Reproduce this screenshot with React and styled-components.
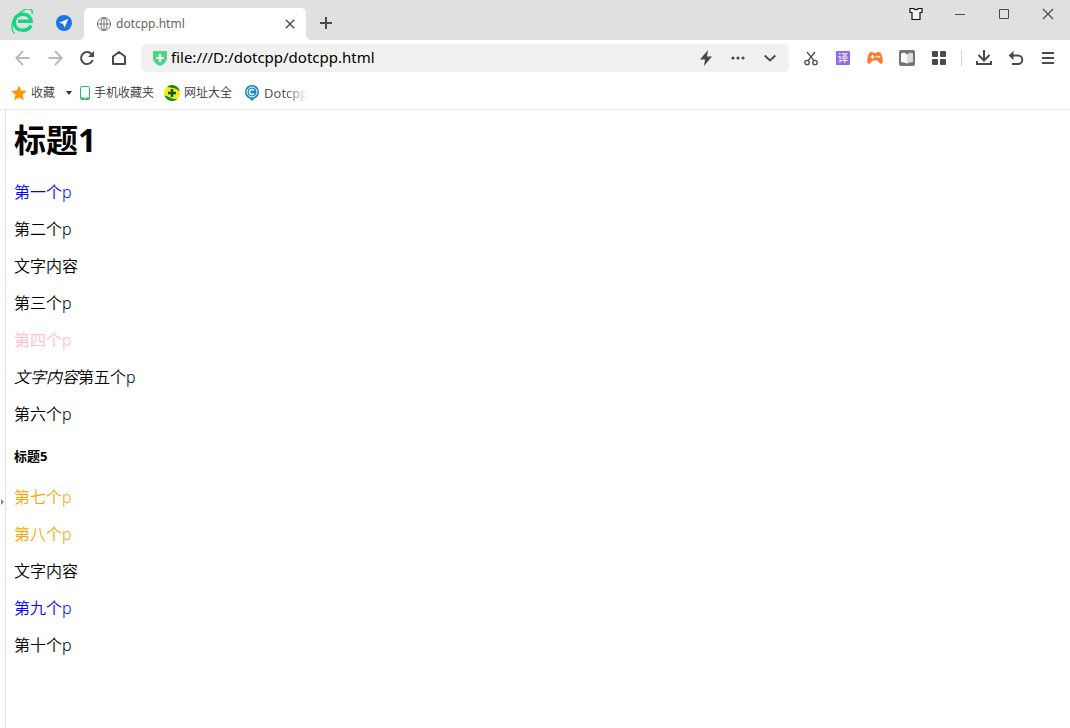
import React from "react";
import styled, { createGlobalStyle } from "styled-components";

const GlobalStyle = createGlobalStyle`
  * {
    box-sizing: border-box;
  }
  body {
    margin: 0;
    background: #fff;
    color: #000;
    font-family: "Noto Sans", "Noto Sans CJK SC", sans-serif;
  }
  svg {
    display: block;
    flex: none;
  }
`;

const Browser = styled.div`
  display: flex;
  flex-direction: column;
  min-height: 100vh;
`;

const TitleBar = styled.header`
  display: flex;
  align-items: flex-end;
  height: 40px;
  background: #e0e0e0;
`;

const Brand = styled.div`
  display: flex;
  align-items: center;
  align-self: stretch;
  gap: 22px;
  width: 84px;
  padding: 6px 0 0 10px;
`;

const PlainButton = styled.button`
  display: flex;
  align-items: center;
  justify-content: center;
  margin: 0;
  padding: 0;
  border: 0;
  background: none;
  color: #4a4a4a;
  font: inherit;
`;

const Tab = styled.div`
  position: relative;
  display: flex;
  align-items: center;
  gap: 4px;
  width: 222px;
  height: 32px;
  padding: 0 8px 0 12px;
  border-radius: 5px 5px 0 0;
  background: #fff;

  &::before,
  &::after {
    content: "";
    position: absolute;
    bottom: 0;
    width: 4px;
    height: 4px;
  }
  &::before {
    left: -4px;
    background: radial-gradient(circle at 0 0, #e0e0e0 3px, #fff 4px);
  }
  &::after {
    right: -4px;
    background: radial-gradient(circle at 100% 0, #e0e0e0 3px, #fff 4px);
  }
`;

const TabTitle = styled.span`
  flex: 1;
  color: #666;
  font-size: 12px;
  line-height: 18px;
`;

const TabClose = styled(PlainButton)`
  width: 16px;
  height: 16px;
`;

const NewTab = styled(PlainButton)`
  width: 40px;
  height: 34px;
`;

const WindowControls = styled.div`
  display: flex;
  align-self: flex-start;
  margin-left: auto;
`;

const WindowButton = styled(PlainButton)`
  width: 44px;
  height: 28px;
`;

const Toolbar = styled.nav`
  display: flex;
  align-items: center;
  height: 36px;
  padding: 0 6px 0 7px;
`;

const ToolButton = styled(PlainButton)`
  flex: none;
  width: 32px;
  height: 28px;
  color: ${props => (props.disabled ? "#b8b8b8" : "#4a4a4a")};
`;

const AddressBar = styled.div`
  display: flex;
  flex: 1;
  align-items: center;
  height: 28px;
  margin: 0 6px;
  padding: 0 3px 0 11px;
  border-radius: 5px;
  background: #f1f1f1;
`;

const AddressInput = styled.input`
  flex: 1;
  min-width: 0;
  height: 28px;
  padding: 0 0 2px 3px;
  border: 0;
  outline: 0;
  background: none;
  color: #000;
  font: 15px "Noto Sans", "Noto Sans CJK SC", sans-serif;
`;

const Divider = styled.span`
  flex: none;
  width: 1px;
  height: 16px;
  margin: 0 6px;
  background: #d4d4d4;
`;

const Bookmarks = styled.nav`
  display: flex;
  align-items: center;
  gap: 10px;
  height: 34px;
  padding: 0 11px;
  border-bottom: 1px solid #ececec;
`;

const Bookmark = styled.a`
  display: flex;
  align-items: center;
  gap: 4px;
  color: #333;
  font-size: 12px;
  font-weight: 350;
  line-height: 18px;
  text-decoration: none;
  white-space: nowrap;
`;

const FavoritesToggle = styled(PlainButton)`
  width: 8px;
  height: 18px;
  margin-right: -3px;
`;

const FadedLabel = styled.span`
  font-size: 13px;
  font-weight: 400;
  color: #555;
  mask-image: linear-gradient(to right, #000 50%, transparent);
`;

const Viewport = styled.div`
  display: flex;
  flex: 1;
`;

const SideHandle = styled(PlainButton)`
  flex: none;
  justify-content: flex-start;
  width: 6px;
  padding-top: 166px;
  border-right: 1px solid #e3e3e3;
`;

const Page = styled.main`
  flex: 1;
  padding: 8px;
  font-size: 16px;
  font-weight: 350;
  line-height: 21px;
`;

const Heading1 = styled.h1`
  margin: 0 0 21px;
  font-size: 32px;
  line-height: 43px;
`;

const Heading5 = styled.h5`
  margin: 22px 0;
  font-size: 13px;
  line-height: 18px;
`;

const Paragraph = styled.p`
  margin: 16px 0;
  color: ${props => props.$color || "#000"};
`;

const LogoIcon = () => (
  <svg width="24" height="28" viewBox="0 0 24 28" fill="none" stroke="#14d683">
    <path
      d="M21 16.500C19.500 19.800 16.500 21.300 12.800 21.300C7.500 21.300 4.200 18 4.200 13.200C4.200 8.500 7.800 5.200 12.500 5.200C17.500 5.200 20.800 8 21 12.300H8"
      strokeWidth="3.600"
    />
    <path d="M4.500 24.500C0 20.500 1.500 10 9 4.500C13 1.200 18.500 -1.500 21.500 1C22.500 2 22.500 3.500 22 5" strokeWidth="1.400" />
  </svg>
);

const PlaneIcon = () => (
  <svg width="16" height="16" viewBox="0 0 16 16">
    <circle cx="8" cy="8" r="8" fill="#1a73e8" />
    <path d="M12.300 3.700L3 7.800L7 8.800L8.600 12.800Z" fill="#fff" />
  </svg>
);

const GlobeIcon = () => (
  <svg width="16" height="16" viewBox="0 0 16 16" fill="none" stroke="#777">
    <circle cx="8" cy="8" r="6.500" />
    <ellipse cx="8" cy="8" rx="3" ry="6.500" />
    <path d="M1.500 8H14.500M8 1.500V14.500" />
  </svg>
);

const CrossIcon = ({ size, weight }) => (
  <svg width={size} height={size} viewBox="0 0 10 10" fill="none" stroke="currentColor" strokeWidth={weight}>
    <path d="M0.800 0.800L9.200 9.200M9.200 0.800L0.800 9.200" />
  </svg>
);

const PlusIcon = () => (
  <svg width="12" height="12" viewBox="0 0 12 12" stroke="currentColor" strokeWidth="2">
    <path d="M6 0V12M0 6H12" />
  </svg>
);

const ShirtIcon = () => (
  <svg width="14" height="14" viewBox="0 0 14 14" fill="#f4f4f4" stroke="#111" strokeWidth="1.200">
    <path d="M1 1.500H4.500Q7 3.800 9.500 1.500H13V5.500H11V12.500H3V5.500H1Z" />
  </svg>
);

const MinimizeIcon = () => (
  <svg width="10" height="10" viewBox="0 0 10 10" stroke="currentColor">
    <path d="M0 5.500H10" />
  </svg>
);

const MaximizeIcon = () => (
  <svg width="10" height="10" viewBox="0 0 10 10" fill="none" stroke="currentColor">
    <path d="M0.500 0.500H9.500V9.500H0.500Z" />
  </svg>
);

const BackIcon = () => (
  <svg width="16" height="16" viewBox="0 0 16 16" fill="none" stroke="currentColor" strokeWidth="1.800">
    <path d="M14.500 8H1.500M8 1L1.200 8L8 15" />
  </svg>
);

const ForwardIcon = () => (
  <svg width="16" height="16" viewBox="0 0 16 16" fill="none" stroke="currentColor" strokeWidth="1.800">
    <path d="M1.500 8H14.500M8 1L14.800 8L8 15" />
  </svg>
);

const ReloadIcon = () => (
  <svg width="16" height="16" viewBox="0 0 16 16" fill="none" stroke="currentColor" strokeWidth="2">
    <path d="M13.700 10A6 6 0 1 1 12.500 4" />
    <path d="M15 1V7H9Z" fill="currentColor" stroke="none" />
  </svg>
);

const HomeIcon = () => (
  <svg width="16" height="16" viewBox="0 0 16 16" fill="none" stroke="currentColor" strokeWidth="2" strokeLinejoin="round">
    <path d="M2 6.500L8 2L14 6.500V14H2Z" />
  </svg>
);

const ShieldIcon = () => (
  <svg width="16" height="16" viewBox="0 0 16 16">
    <path d="M1 2Q1 1 2 1H14Q15 1 15 2V9Q14.500 13 8 16Q1.500 13 1 9Z" fill="#48d97f" />
    <path d="M8 4V12M4 8H12" stroke="#fff" strokeWidth="2.200" />
  </svg>
);

const BoltIcon = () => (
  <svg width="14" height="16" viewBox="0 0 14 16" fill="currentColor">
    <path d="M9 0L1 9.500H6L5 16L13 6.500H8Z" />
  </svg>
);

const DotsIcon = () => (
  <svg width="14" height="14" viewBox="0 0 14 14" fill="currentColor">
    <circle cx="2" cy="7" r="1.600" />
    <circle cx="7" cy="7" r="1.600" />
    <circle cx="12" cy="7" r="1.600" />
  </svg>
);

const ChevronIcon = () => (
  <svg width="12" height="12" viewBox="0 0 12 12" fill="none" stroke="currentColor" strokeWidth="2">
    <path d="M0.700 3.500L6 8.500L11.300 3.500" />
  </svg>
);

const ScissorsIcon = () => (
  <svg width="14" height="16" viewBox="0 0 14 16" fill="none" stroke="currentColor" strokeWidth="1.300">
    <circle cx="3" cy="12.500" r="2.200" />
    <circle cx="11" cy="12.500" r="2.200" />
    <path d="M3 2L10 10.700M11 2L4 10.700" />
  </svg>
);

const TranslateBadge = styled.span`
  width: 14px;
  height: 14px;
  border-radius: 1px;
  background: #9166f7;
  color: #fff;
  font-size: 11px;
  line-height: 14px;
  text-align: center;
`;

const GamepadIcon = () => (
  <svg width="16" height="16" viewBox="0 0 16 16">
    <path
      d="M4.500 2Q6 2.200 6.500 3H9.500Q10 2.200 11.500 2Q14 2 15 6Q16.500 12 15 13.500Q13.500 14.500 12 12.500Q11 10.500 10 10.500H6Q5 10.500 4 12.500Q2.500 14.500 1 13.500Q-0.500 12 1 6Q2 2 4.500 2Z"
      fill="#ff7a26"
    />
    <path d="M5.500 4.800V8.800M3.500 6.800H7.500" stroke="#fff" strokeWidth="1.300" />
    <circle cx="9.700" cy="6.800" r="1" fill="#fff" />
    <circle cx="12.300" cy="6.800" r="1" fill="#fff" />
  </svg>
);

const BookIcon = () => (
  <svg width="16" height="16" viewBox="0 0 16 16">
    <rect width="16" height="16" rx="2" fill="#74757c" />
    <path d="M2 3.500L5 2.500L8 4.500V13.500L5 12.500L2 12Z" fill="#fff" />
    <path d="M14 3.500L11 2.500L8 4.500V13.500L11 12.500L14 12Z" fill="#dcdce0" />
  </svg>
);

const GridIcon = () => (
  <svg width="14" height="14" viewBox="0 0 14 14" fill="currentColor">
    <rect width="6" height="6" rx="1" />
    <rect x="8" width="6" height="6" rx="1" />
    <rect y="8" width="6" height="6" rx="1" />
    <rect x="8" y="8" width="6" height="6" rx="1" />
  </svg>
);

const DownloadIcon = () => (
  <svg width="16" height="16" viewBox="0 0 16 16" fill="none" stroke="currentColor" strokeWidth="2">
    <path d="M8 0V10M2.500 5L8 10.500L13.500 5M1 11V14H15V11" />
  </svg>
);

const UndoIcon = () => (
  <svg width="16" height="16" viewBox="0 0 16 16" fill="none" stroke="currentColor" strokeWidth="2">
    <path d="M3 5.500H10A4.200 4.200 0 0 1 10 14H4" />
    <path d="M5.500 1V10L0.500 5.500Z" fill="currentColor" stroke="none" />
  </svg>
);

const MenuIcon = () => (
  <svg width="12" height="14" viewBox="0 0 12 14" stroke="currentColor" strokeWidth="2">
    <path d="M0 2H12M0 7H12M0 12H12" />
  </svg>
);

const StarIcon = () => (
  <svg width="16" height="16" viewBox="0 0 16 16" fill="#ff9500">
    <path d="M8 0.500L10.200 5.500L15.700 6.100L11.600 9.800L12.800 15.200L8 12.400L3.200 15.200L4.400 9.800L0.300 6.100L5.800 5.500Z" />
  </svg>
);

const CaretIcon = () => (
  <svg width="6" height="4" viewBox="0 0 6 4" fill="#333">
    <path d="M0 0H6L3 4Z" />
  </svg>
);

const PhoneIcon = () => (
  <svg width="10" height="14" viewBox="0 0 10 14">
    <rect x="0.500" y="0.500" width="9" height="13" rx="1" fill="#f4fff8" stroke="#35b768" />
    <path d="M1 11.500H9V13H1Z" fill="#35b768" />
    <path d="M4 12H6" stroke="#fff" />
  </svg>
);

const SitesIcon = () => (
  <svg width="16" height="16" viewBox="0 0 16 16">
    <circle cx="8" cy="8" r="8" fill="#ffe51a" />
    <path d="M0.500 10.500A8 8 0 0 0 13.500 13.800Q10 14.500 6.500 12.800Q3 11 0.500 10.500Z" fill="#128a2a" />
    <path d="M3 1.800A8 8 0 0 1 15.800 6.500Q13 3.500 9.500 3Q6 2.800 3 1.800Z" fill="#128a2a" />
    <path d="M8 4V12M4 8H12" stroke="#075f17" strokeWidth="2.600" />
  </svg>
);

const DotcppIcon = () => (
  <svg width="18" height="16" viewBox="-2 0 18 16" fill="none">
    <path d="M8 0A7 7 0 0 1 10.500 13.500L8 16L5.500 13.500A7 7 0 0 1 8 0Z" fill="#1686cb" />
    <circle cx="8" cy="7" r="5" stroke="#fff" strokeWidth="1" />
    <path d="M10 5.500A2.500 2.500 0 1 0 10 8.500" stroke="#fff" strokeWidth="1.500" />
  </svg>
);

const HandleIcon = () => (
  <svg width="4" height="6" viewBox="0 0 4 6" fill="#888">
    <path d="M1 0L4 3L1 6Z" />
  </svg>
);

const App = () => (
  <Browser>
    <GlobalStyle />
    <TitleBar>
      <Brand>
        <LogoIcon />
        <PlainButton aria-label="Navigate">
          <PlaneIcon />
        </PlainButton>
      </Brand>
      <Tab>
        <GlobeIcon />
        <TabTitle>dotcpp.html</TabTitle>
        <TabClose aria-label="Close tab">
          <CrossIcon size={10} weight={1.4} />
        </TabClose>
      </Tab>
      <NewTab aria-label="New tab">
        <PlusIcon />
      </NewTab>
      <WindowControls>
        <WindowButton aria-label="Skin">
          <ShirtIcon />
        </WindowButton>
        <WindowButton aria-label="Minimize">
          <MinimizeIcon />
        </WindowButton>
        <WindowButton aria-label="Maximize">
          <MaximizeIcon />
        </WindowButton>
        <WindowButton aria-label="Close">
          <CrossIcon size={12} weight={1} />
        </WindowButton>
      </WindowControls>
    </TitleBar>
    <Toolbar>
      <ToolButton disabled aria-label="Back">
        <BackIcon />
      </ToolButton>
      <ToolButton disabled aria-label="Forward">
        <ForwardIcon />
      </ToolButton>
      <ToolButton aria-label="Reload">
        <ReloadIcon />
      </ToolButton>
      <ToolButton aria-label="Home">
        <HomeIcon />
      </ToolButton>
      <AddressBar>
        <ShieldIcon />
        <AddressInput
          aria-label="Address"
          defaultValue="file:///D:/dotcpp/dotcpp.html"
        />
        <ToolButton aria-label="Speed mode">
          <BoltIcon />
        </ToolButton>
        <ToolButton aria-label="More">
          <DotsIcon />
        </ToolButton>
        <ToolButton aria-label="History">
          <ChevronIcon />
        </ToolButton>
      </AddressBar>
      <ToolButton aria-label="Screenshot">
        <ScissorsIcon />
      </ToolButton>
      <ToolButton>
        <TranslateBadge>译</TranslateBadge>
      </ToolButton>
      <ToolButton aria-label="Games">
        <GamepadIcon />
      </ToolButton>
      <ToolButton aria-label="Reader">
        <BookIcon />
      </ToolButton>
      <ToolButton aria-label="Extensions">
        <GridIcon />
      </ToolButton>
      <Divider />
      <ToolButton aria-label="Downloads">
        <DownloadIcon />
      </ToolButton>
      <ToolButton aria-label="Restore">
        <UndoIcon />
      </ToolButton>
      <ToolButton aria-label="Menu">
        <MenuIcon />
      </ToolButton>
    </Toolbar>
    <Bookmarks>
      <Bookmark href="#favorites">
        <StarIcon />
        收藏
      </Bookmark>
      <FavoritesToggle aria-label="Show favorites">
        <CaretIcon />
      </FavoritesToggle>
      <Bookmark href="#mobile">
        <PhoneIcon />
        手机收藏夹
      </Bookmark>
      <Bookmark href="#sites">
        <SitesIcon />
        网址大全
      </Bookmark>
      <Bookmark href="#dotcpp">
        <DotcppIcon />
        <FadedLabel>Dotcpp</FadedLabel>
      </Bookmark>
    </Bookmarks>
    <Viewport>
      <SideHandle aria-label="Open sidebar">
        <HandleIcon />
      </SideHandle>
      <Page>
        <Heading1>标题1</Heading1>
        <Paragraph $color="blue">第一个p</Paragraph>
        <Paragraph>第二个p</Paragraph>
        <div>文字内容</div>
        <Paragraph>第三个p</Paragraph>
        <Paragraph $color="pink">第四个p</Paragraph>
        <Paragraph>
          <i>文字内容</i>第五个p
        </Paragraph>
        <Paragraph>第六个p</Paragraph>
        <Heading5>标题5</Heading5>
        <Paragraph $color="orange">第七个p</Paragraph>
        <Paragraph $color="orange">第八个p</Paragraph>
        <div>文字内容</div>
        <Paragraph $color="blue">第九个p</Paragraph>
        <Paragraph>第十个p</Paragraph>
      </Page>
    </Viewport>
  </Browser>
);

export default App;
